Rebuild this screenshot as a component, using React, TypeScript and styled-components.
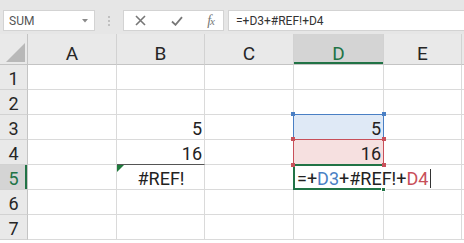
import React from "react";
import styled, { createGlobalStyle, css } from "styled-components";

const GREEN = "#217346";
const BLUE = "#4a7fc4";
const RED = "#c8505a";
const GRID = "#dadada";
const HEAD_LINE = "#c4c4c4";

const GlobalStyle = createGlobalStyle`
  html, body { margin: 0; padding: 0; background: #fff; overflow: hidden; }
  body { font-family: Roboto, "Liberation Sans", Arial, sans-serif; }
  * { box-sizing: border-box; }
`;

const Page = styled.div`
  width: 464px;
  height: 243px;
  overflow: hidden;
  background: #fff;
`;

/* ---------- formula bar ---------- */
const FormulaBar = styled.div`
  display: flex;
  align-items: flex-end;
  height: 34px;
  padding: 0 0 3px 3px;
  background: #e6e6e6;
`;

const NameBox = styled.div`
  width: 92px;
  height: 21px;
  display: flex;
  align-items: center;
  justify-content: space-between;
  padding: 0 6px 0 5px;
  background: #fff;
  border: 1px solid #d3d3d3;
  font-size: 12px;
  color: #555;
`;

const Grip = styled.div`
  width: 28px;
  height: 21px;
  display: flex;
  flex-direction: column;
  align-items: center;
  justify-content: center;
  gap: 2px;
`;

const GripDot = styled.span`
  width: 2px;
  height: 2px;
  border-radius: 1px;
  background: #b3b3b3;
`;

const FxButtons = styled.div`
  width: 101px;
  height: 21px;
  display: flex;
  align-items: center;
  justify-content: space-between;
  padding: 0 9px 0 11px;
  background: #fff;
  border: 1px solid #d3d3d3;
  color: #777;
`;

const FxLabel = styled.span`
  font-family: "Liberation Serif", "DejaVu Serif", serif;
  font-style: italic;
  font-size: 14px;
  color: #777;
  letter-spacing: -1px;
  line-height: 1;
`;

const FxSub = styled.span`
  font-size: 11px;
`;

const FormulaInput = styled.div`
  flex: 1;
  height: 21px;
  margin-left: 4px;
  display: flex;
  align-items: center;
  padding-left: 7px;
  background: #fff;
  border: 1px solid #d3d3d3;
  border-right: none;
  font-size: 12px;
  color: #333;
  white-space: nowrap;
`;

/* ---------- sheet ---------- */
const Sheet = styled.div`
  display: grid;
  grid-template-columns: 28px 89px 88px 89px 90px 78px 90px;
  grid-template-rows: 31px repeat(7, 25px);
  width: 552px;
`;

const Corner = styled.div`
  background: #e9e9e9;
  border-right: 1px solid ${HEAD_LINE};
  border-bottom: 1px solid ${HEAD_LINE};
  display: flex;
  align-items: flex-end;
  justify-content: flex-end;
  padding: 0 2px 2px 0;
`;

const ColHeader = styled.div<{ $selected?: boolean }>`
  background: ${(p) => (p.$selected ? "#d4d4d4" : "#e9e9e9")};
  border-right: 1px solid #d2d2d2;
  border-bottom: 1px solid ${HEAD_LINE};
  text-align: center;
  font-size: 19px;
  line-height: 20px;
  padding-top: 10px;
  color: ${(p) => (p.$selected ? GREEN : "#262626")};
  ${(p) =>
    p.$selected &&
    css`
      box-shadow: inset 0 -2px 0 ${GREEN};
    `}
`;

const RowHeader = styled.div<{ $selected?: boolean }>`
  background: ${(p) => (p.$selected ? "#d4d4d4" : "#e9e9e9")};
  border-right: 1px solid ${HEAD_LINE};
  border-bottom: 1px solid #d2d2d2;
  text-align: center;
  font-size: 18px;
  line-height: 21px;
  padding-top: 3px;
  color: ${(p) => (p.$selected ? GREEN : "#262626")};
  ${(p) =>
    p.$selected &&
    css`
      box-shadow: inset -2px 0 0 ${GREEN};
    `}
`;

type Align = "left" | "right" | "center";

const Cell = styled.div<{ $align?: Align; $fill?: string; $darkBottom?: boolean }>`
  position: relative;
  background: ${(p) => p.$fill || "#fff"};
  border-right: 1px solid ${GRID};
  border-bottom: 1px solid ${(p) => (p.$darkBottom ? "#555" : GRID)};
  text-align: ${(p) => p.$align || "left"};
  font-size: 18px;
  line-height: 21px;
  padding: 3px 2px 0 3px;
  color: #222;
  white-space: nowrap;
`;

const RefCell = styled(Cell)<{ $tone: string }>`
  &::after {
    content: "";
    position: absolute;
    inset: -1px;
    border: 1.5px solid ${(p) => p.$tone};
    pointer-events: none;
  }
`;

const ActiveCell = styled(Cell)`
  z-index: 2;
  border-right-color: transparent;
  overflow: visible;
  &::after {
    content: "";
    position: absolute;
    top: -1px;
    left: -1px;
    right: -1px;
    bottom: -1px;
    border: 2px solid ${GREEN};
    border-right: none;
    pointer-events: none;
  }
`;

const Handle = styled.span<{ $tone: string; $v: "top" | "bottom"; $h: "left" | "right" }>`
  position: absolute;
  width: 4px;
  height: 4px;
  background: ${(p) => p.$tone};
  z-index: 3;
  ${(p) => (p.$v === "top" ? "top: -3px;" : "bottom: -3px;")}
  ${(p) => (p.$h === "left" ? "left: -3px;" : "right: -3px;")}
`;

const FillHandle = styled.span`
  position: absolute;
  right: -3px;
  bottom: -3px;
  width: 5px;
  height: 5px;
  background: ${GREEN};
  border: 1px solid #fff;
  z-index: 3;
`;

const ErrorMark = styled.span`
  position: absolute;
  top: 0;
  left: 0;
  width: 0;
  height: 0;
  border-top: 7px solid #1e7a3c;
  border-right: 7px solid transparent;
`;

const Token = styled.span<{ $color?: string }>`
  color: ${(p) => p.$color || "#222"};
`;

const Cursor = styled.span`
  display: inline-block;
  width: 1px;
  height: 19px;
  margin-left: 2px;
  vertical-align: -3px;
  background: #333;
`;

/* F lies mostly beyond the window edge; only its left border is visible */
const COLS = [
  { key: "A", label: "A" },
  { key: "B", label: "B" },
  { key: "C", label: "C" },
  { key: "D", label: "D" },
  { key: "E", label: "E" },
  { key: "F", label: "" },
];
const ROWS = [1, 2, 3, 4, 5, 6, 7];

function renderCell(col: string, row: number) {
  const key = `${col}${row}`;
  switch (key) {
    case "B3":
      return (
        <Cell key={key} $align="right">
          5
        </Cell>
      );
    case "B4":
      return (
        <Cell key={key} $align="right" $darkBottom>
          16
        </Cell>
      );
    case "B5":
      return (
        <Cell key={key} $align="center">
          <ErrorMark />
          #REF!
        </Cell>
      );
    case "D3":
      return (
        <RefCell key={key} $align="right" $fill="#dfe9f6" $tone={BLUE}>
          5
          <Handle $tone={BLUE} $v="top" $h="left" />
          <Handle $tone={BLUE} $v="top" $h="right" />
        </RefCell>
      );
    case "D4":
      return (
        <RefCell key={key} $align="right" $fill="#f6e0e0" $tone={RED}>
          16
          <Handle $tone={RED} $v="top" $h="left" />
          <Handle $tone={RED} $v="top" $h="right" />
          <Handle $tone={RED} $v="bottom" $h="left" />
          <Handle $tone={RED} $v="bottom" $h="right" />
        </RefCell>
      );
    case "D5":
      return (
        <ActiveCell key={key}>
          <Token>=+</Token>
          <Token $color={BLUE}>D3</Token>
          <Token>+#REF!+</Token>
          <Token $color={RED}>D4</Token>
          <Cursor />
          <FillHandle />
        </ActiveCell>
      );
    default:
      return <Cell key={key} />;
  }
}

export default function App() {
  return (
    <Page>
      <GlobalStyle />
      <FormulaBar>
        <NameBox>
          <span>SUM</span>
          <svg width="6" height="4" viewBox="0 0 6 4">
            <path d="M0 0 L6 0 L3 3.5 Z" fill="#8a8a8a" />
          </svg>
        </NameBox>
        <Grip>
          <GripDot />
          <GripDot />
          <GripDot />
        </Grip>
        <FxButtons>
          <svg width="11" height="11" viewBox="0 0 11 11">
            <path d="M1 1 L10 10 M10 1 L1 10" stroke="#777" strokeWidth="1.6" fill="none" />
          </svg>
          <svg width="12" height="10" viewBox="0 0 12 10">
            <path d="M1 5.5 L4.5 8.8 L11 1.2" stroke="#777" strokeWidth="1.8" fill="none" />
          </svg>
          <FxLabel>
            f<FxSub>x</FxSub>
          </FxLabel>
        </FxButtons>
        <FormulaInput>=+D3+#REF!+D4</FormulaInput>
      </FormulaBar>
      <Sheet>
        <Corner>
          <svg width="19" height="19" viewBox="0 0 19 19">
            <path d="M19 0 L19 19 L0 19 Z" fill="#b8b8b8" />
          </svg>
        </Corner>
        {COLS.map((c) => (
          <ColHeader key={c.key} $selected={c.key === "D"}>
            {c.label}
          </ColHeader>
        ))}
        {ROWS.map((r) => (
          <React.Fragment key={r}>
            <RowHeader $selected={r === 5}>{r}</RowHeader>
            {COLS.map((c) => renderCell(c.key, r))}
          </React.Fragment>
        ))}
      </Sheet>
    </Page>
  );
}
